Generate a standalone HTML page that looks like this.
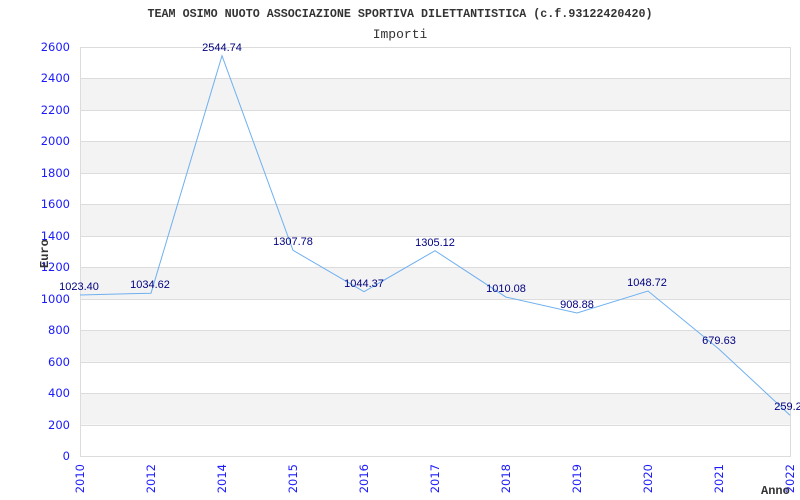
<!DOCTYPE html>
<html><head><style>body{margin:0;background:#fff}svg{display:block}</style></head><body>
<svg width="800" height="500" xmlns="http://www.w3.org/2000/svg">
<g fill="#f3f3f3">
<rect x="80" y="78.5" width="710" height="31.5"/>
<rect x="80" y="141.5" width="710" height="31.5"/>
<rect x="80" y="204.4" width="710" height="31.5"/>
<rect x="80" y="267.4" width="710" height="31.5"/>
<rect x="80" y="330.2" width="710" height="31.5"/>
<rect x="80" y="393.1" width="710" height="31.5"/>
</g>
<g stroke="#dcdcdc" stroke-width="1">
<line x1="80" x2="790" y1="47.5" y2="47.5"/><line x1="80" x2="790" y1="78.5" y2="78.5"/>
<line x1="80" x2="790" y1="110.5" y2="110.5"/><line x1="80" x2="790" y1="141.5" y2="141.5"/>
<line x1="80" x2="790" y1="173.5" y2="173.5"/><line x1="80" x2="790" y1="204.5" y2="204.5"/>
<line x1="80" x2="790" y1="236.5" y2="236.5"/><line x1="80" x2="790" y1="267.5" y2="267.5"/>
<line x1="80" x2="790" y1="299.5" y2="299.5"/><line x1="80" x2="790" y1="330.5" y2="330.5"/>
<line x1="80" x2="790" y1="362.5" y2="362.5"/><line x1="80" x2="790" y1="393.5" y2="393.5"/>
<line x1="80" x2="790" y1="425.5" y2="425.5"/><line x1="80" x2="790" y1="456.5" y2="456.5"/>
<line x1="80.5" x2="80.5" y1="47" y2="457"/><line x1="790.5" x2="790.5" y1="47" y2="457"/>
</g>
<text x="400" y="17" text-anchor="middle" font-family="Liberation Mono,monospace" font-weight="bold" font-size="11.7" fill="#333">TEAM OSIMO NUOTO ASSOCIAZIONE SPORTIVA DILETTANTISTICA (c.f.93122420420)</text>
<text x="400" y="38" text-anchor="middle" font-family="Liberation Mono,monospace" font-size="13" fill="#333">Importi</text>
<g font-family="DejaVu Sans,sans-serif" font-size="11.5" fill="#1a1aff" text-anchor="end">
<text x="70" y="51">2600</text><text x="70" y="82">2400</text><text x="70" y="114">2200</text>
<text x="70" y="145">2000</text><text x="70" y="177">1800</text><text x="70" y="208">1600</text>
<text x="70" y="240">1400</text><text x="70" y="271">1200</text><text x="70" y="303">1000</text>
<text x="70" y="334">800</text><text x="70" y="366">600</text><text x="70" y="397">400</text>
<text x="70" y="429">200</text><text x="70" y="460">0</text>
</g>
<g font-family="DejaVu Sans,sans-serif" font-size="11.5" fill="#1a1aff" text-anchor="end">
<text transform="translate(84,464) rotate(-90)">2010</text>
<text transform="translate(155,464) rotate(-90)">2012</text>
<text transform="translate(226,464) rotate(-90)">2014</text>
<text transform="translate(297,464) rotate(-90)">2015</text>
<text transform="translate(368,464) rotate(-90)">2016</text>
<text transform="translate(439,464) rotate(-90)">2017</text>
<text transform="translate(510,464) rotate(-90)">2018</text>
<text transform="translate(581,464) rotate(-90)">2019</text>
<text transform="translate(652,464) rotate(-90)">2020</text>
<text transform="translate(723,464) rotate(-90)">2021</text>
<text transform="translate(794,464) rotate(-90)">2022</text>
</g>
<text transform="translate(48,268) rotate(-90)" font-family="Liberation Mono,monospace" font-weight="bold" font-size="12" fill="#333">Euro</text>
<text x="761" y="494" font-family="Liberation Mono,monospace" font-weight="bold" font-size="12" fill="#333">Anno</text>
<polyline fill="none" stroke="#6fb0f0" stroke-width="1" points="80,295 151,293.2 222,55.7 293,250.3 364,291.7 435,250.7 506,297.1 577,313 648,291 719,349.1 790,415.2"/>
<g font-family="Liberation Sans,sans-serif" font-size="11" fill="#000080" text-anchor="middle">
<text x="79" y="290">1023.40</text><text x="150" y="288">1034.62</text><text x="222" y="51">2544.74</text>
<text x="293" y="245">1307.78</text><text x="364" y="287">1044.37</text><text x="435" y="246">1305.12</text>
<text x="506" y="292">1010.08</text><text x="577" y="308">908.88</text><text x="647" y="286">1048.72</text>
<text x="719" y="344">679.63</text><text x="788" y="410">259.2</text>
</g>
</svg>
</body></html>
